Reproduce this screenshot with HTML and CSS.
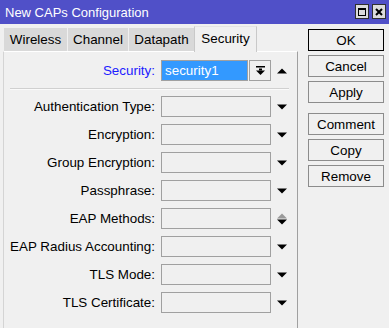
FILE: index.html
```html
<!DOCTYPE html>
<html>
<head>
<meta charset="utf-8">
<link rel="stylesheet" href="styles.css">
</head>
<body>
<div class="window">
  <div class="titlebar">
    <span class="title">New CAPs Configuration</span>
    <div class="tbtns">
      <span class="tbtn"><span class="maxbox"></span></span>
      <span class="tbtn">
        <svg width="8" height="8" viewBox="0 0 8 8"><path d="M1 1 L7 7 M7 1 L1 7" stroke="#000" stroke-width="2"/></svg>
      </span>
    </div>
  </div>
  <div class="main">
    <div class="left">
      <div class="tabs">
        <div class="tab w1">Wireless</div>
        <div class="tab w2">Channel</div>
        <div class="tab w3">Datapath</div>
        <div class="tab active">Security</div>
      </div>
      <div class="panel">
        <div class="row">
          <label class="lbl blue">Security:</label>
          <div class="sel">security1</div>
          <div class="selbtn">
            <svg width="9" height="9" viewBox="0 0 9 9"><rect x="0" y="0" width="9" height="1.5" fill="#000"/><rect x="3" y="2.5" width="3" height="2" fill="#000"/><polygon points="0,4.5 9,4.5 4.5,9" fill="#000"/></svg>
          </div>
          <div class="arr"><svg width="10" height="6" viewBox="0 0 10 6"><polygon points="0,5.5 10,5.5 5,0.5" fill="#000"/></svg></div>
        </div>
        <div class="sep"></div>
        <div class="row"><label class="lbl">Authentication Type:</label><div class="box"></div><div class="arr"><svg width="10" height="6" viewBox="0 0 10 6"><polygon points="0,0.5 10,0.5 5,5.5" fill="#000"/></svg></div></div>
        <div class="row"><label class="lbl">Encryption:</label><div class="box"></div><div class="arr"><svg width="10" height="6" viewBox="0 0 10 6"><polygon points="0,0.5 10,0.5 5,5.5" fill="#000"/></svg></div></div>
        <div class="row"><label class="lbl">Group Encryption:</label><div class="box"></div><div class="arr"><svg width="10" height="6" viewBox="0 0 10 6"><polygon points="0,0.5 10,0.5 5,5.5" fill="#000"/></svg></div></div>
        <div class="row"><label class="lbl">Passphrase:</label><div class="box"></div><div class="arr"><svg width="10" height="6" viewBox="0 0 10 6"><polygon points="0,0.5 10,0.5 5,5.5" fill="#000"/></svg></div></div>
        <div class="row"><label class="lbl">EAP Methods:</label><div class="box"></div><div class="arr"><svg width="10" height="12" viewBox="0 0 10 12"><polygon points="0,5.5 10,5.5 5,0.5" fill="#9a9a9a"/><polygon points="0,6.5 10,6.5 5,11.5" fill="#000"/></svg></div></div>
        <div class="row"><label class="lbl">EAP Radius Accounting:</label><div class="box"></div><div class="arr"><svg width="10" height="6" viewBox="0 0 10 6"><polygon points="0,0.5 10,0.5 5,5.5" fill="#000"/></svg></div></div>
        <div class="row"><label class="lbl">TLS Mode:</label><div class="box"></div><div class="arr"><svg width="10" height="6" viewBox="0 0 10 6"><polygon points="0,0.5 10,0.5 5,5.5" fill="#000"/></svg></div></div>
        <div class="row"><label class="lbl">TLS Certificate:</label><div class="box"></div><div class="arr"><svg width="10" height="6" viewBox="0 0 10 6"><polygon points="0,0.5 10,0.5 5,5.5" fill="#000"/></svg></div></div>
      </div>
    </div>
    <div class="buttons">
      <button class="btn default">OK</button>
      <button class="btn">Cancel</button>
      <button class="btn">Apply</button>
      <button class="btn grp">Comment</button>
      <button class="btn">Copy</button>
      <button class="btn">Remove</button>
    </div>
  </div>
</div>
</body>
</html>
```

FILE: styles.css
```css
* { box-sizing: border-box; }
html, body {
  margin: 0;
  padding: 0;
  width: 389px;
  height: 328px;
  overflow: hidden;
  background: #f0f0f0;
  font-family: "Liberation Sans", Arial, sans-serif;
  font-size: 13.4px;
  color: #000;
}
.window { width: 389px; height: 328px; display: flex; flex-direction: column; }
.titlebar {
  height: 24px;
  background: #5050c8;
  display: flex;
  align-items: center;
  justify-content: space-between;
  padding: 0 3px 0 5px;
  flex: none;
}
.title { color: #fff; font-size: 13px; }
.tbtns { display: flex; gap: 3px; margin-top: -1px; }
.tbtn {
  width: 14px;
  height: 15px;
  background: #dcdcdc;
  border: 1px solid #303030;
  display: flex;
  align-items: center;
  justify-content: center;
}
.maxbox {
  width: 8px;
  height: 8px;
  border: 1px solid #000;
  border-top-width: 2px;
}
.main { flex: 1; display: flex; min-height: 0; }
.left { width: 298px; display: flex; flex-direction: column; padding-left: 3px; padding-top: 2px; }
.tabs { display: flex; align-items: flex-end; height: 25px; padding-left: 1px; }
.tab {
  height: 23px;
  background: #d9d9d9;
  border-left: 1px solid #f0f0f0;
  display: flex;
  align-items: center;
  justify-content: center;
}
.tab.w1 { width: 63px; border-left: none; }
.tab.w2 { width: 61px; }
.tab.w3 { width: 66px; }
.tab.active {
  width: 63px;
  height: 26px;
  background: #f0f0f0;
  border: 1px solid #c9c9c9;
  border-top-color: #e4e4e4;
  border-bottom: none;
  margin-bottom: -1px;
  position: relative;
  z-index: 1;
  padding-bottom: 2px;
}
.panel {
  flex: 1;
  border-left: 1px solid #d4d4d4;
  border-top: 1px solid #ffffff;
  border-right: 1px solid #a0a0a0;
  padding-top: 8px;
}
.row { display: flex; align-items: center; height: 21px; margin-bottom: 7px; }
.lbl { width: 151px; text-align: right; flex: none; white-space: nowrap; }
.lbl.blue { color: #1c1cff; }
.box {
  margin-left: 6px;
  width: 110px;
  height: 21px;
  border: 1px solid #a0a0a0;
  background: #f0f0f0;
  flex: none;
}
.sel {
  margin-left: 6px;
  width: 87px;
  height: 21px;
  border: 1px solid #a0a0a0;
  background: #3399ff;
  color: #fff;
  padding-left: 3px;
  line-height: 19px;
  flex: none;
}
.selbtn {
  margin-left: 1px;
  width: 22px;
  height: 21px;
  border: 1px solid #a0a0a0;
  display: flex;
  align-items: center;
  justify-content: center;
  flex: none;
}
.arr { margin-left: 6px; width: 10px; display: flex; align-items: center; justify-content: center; }
.sep {
  height: 2px;
  border-top: 1px solid #d0d0d0;
  border-bottom: 1px solid #fafafa;
  margin: 0 8px 6px 6px;
}
.buttons {
  margin-left: 10px;
  padding-top: 5px;
  display: flex;
  flex-direction: column;
  gap: 4px;
  width: 76px;
}
.btn {
  height: 22px;
  width: 76px;
  background: #f0f0f0;
  border: 1px solid #8c8c8c;
  font-family: "Liberation Sans", Arial, sans-serif;
  font-size: 13.4px;
  color: #000;
  padding: 0;
  margin: 0;
}
.btn.default { border-color: #000; }
.btn.grp { margin-top: 6px; }
```
